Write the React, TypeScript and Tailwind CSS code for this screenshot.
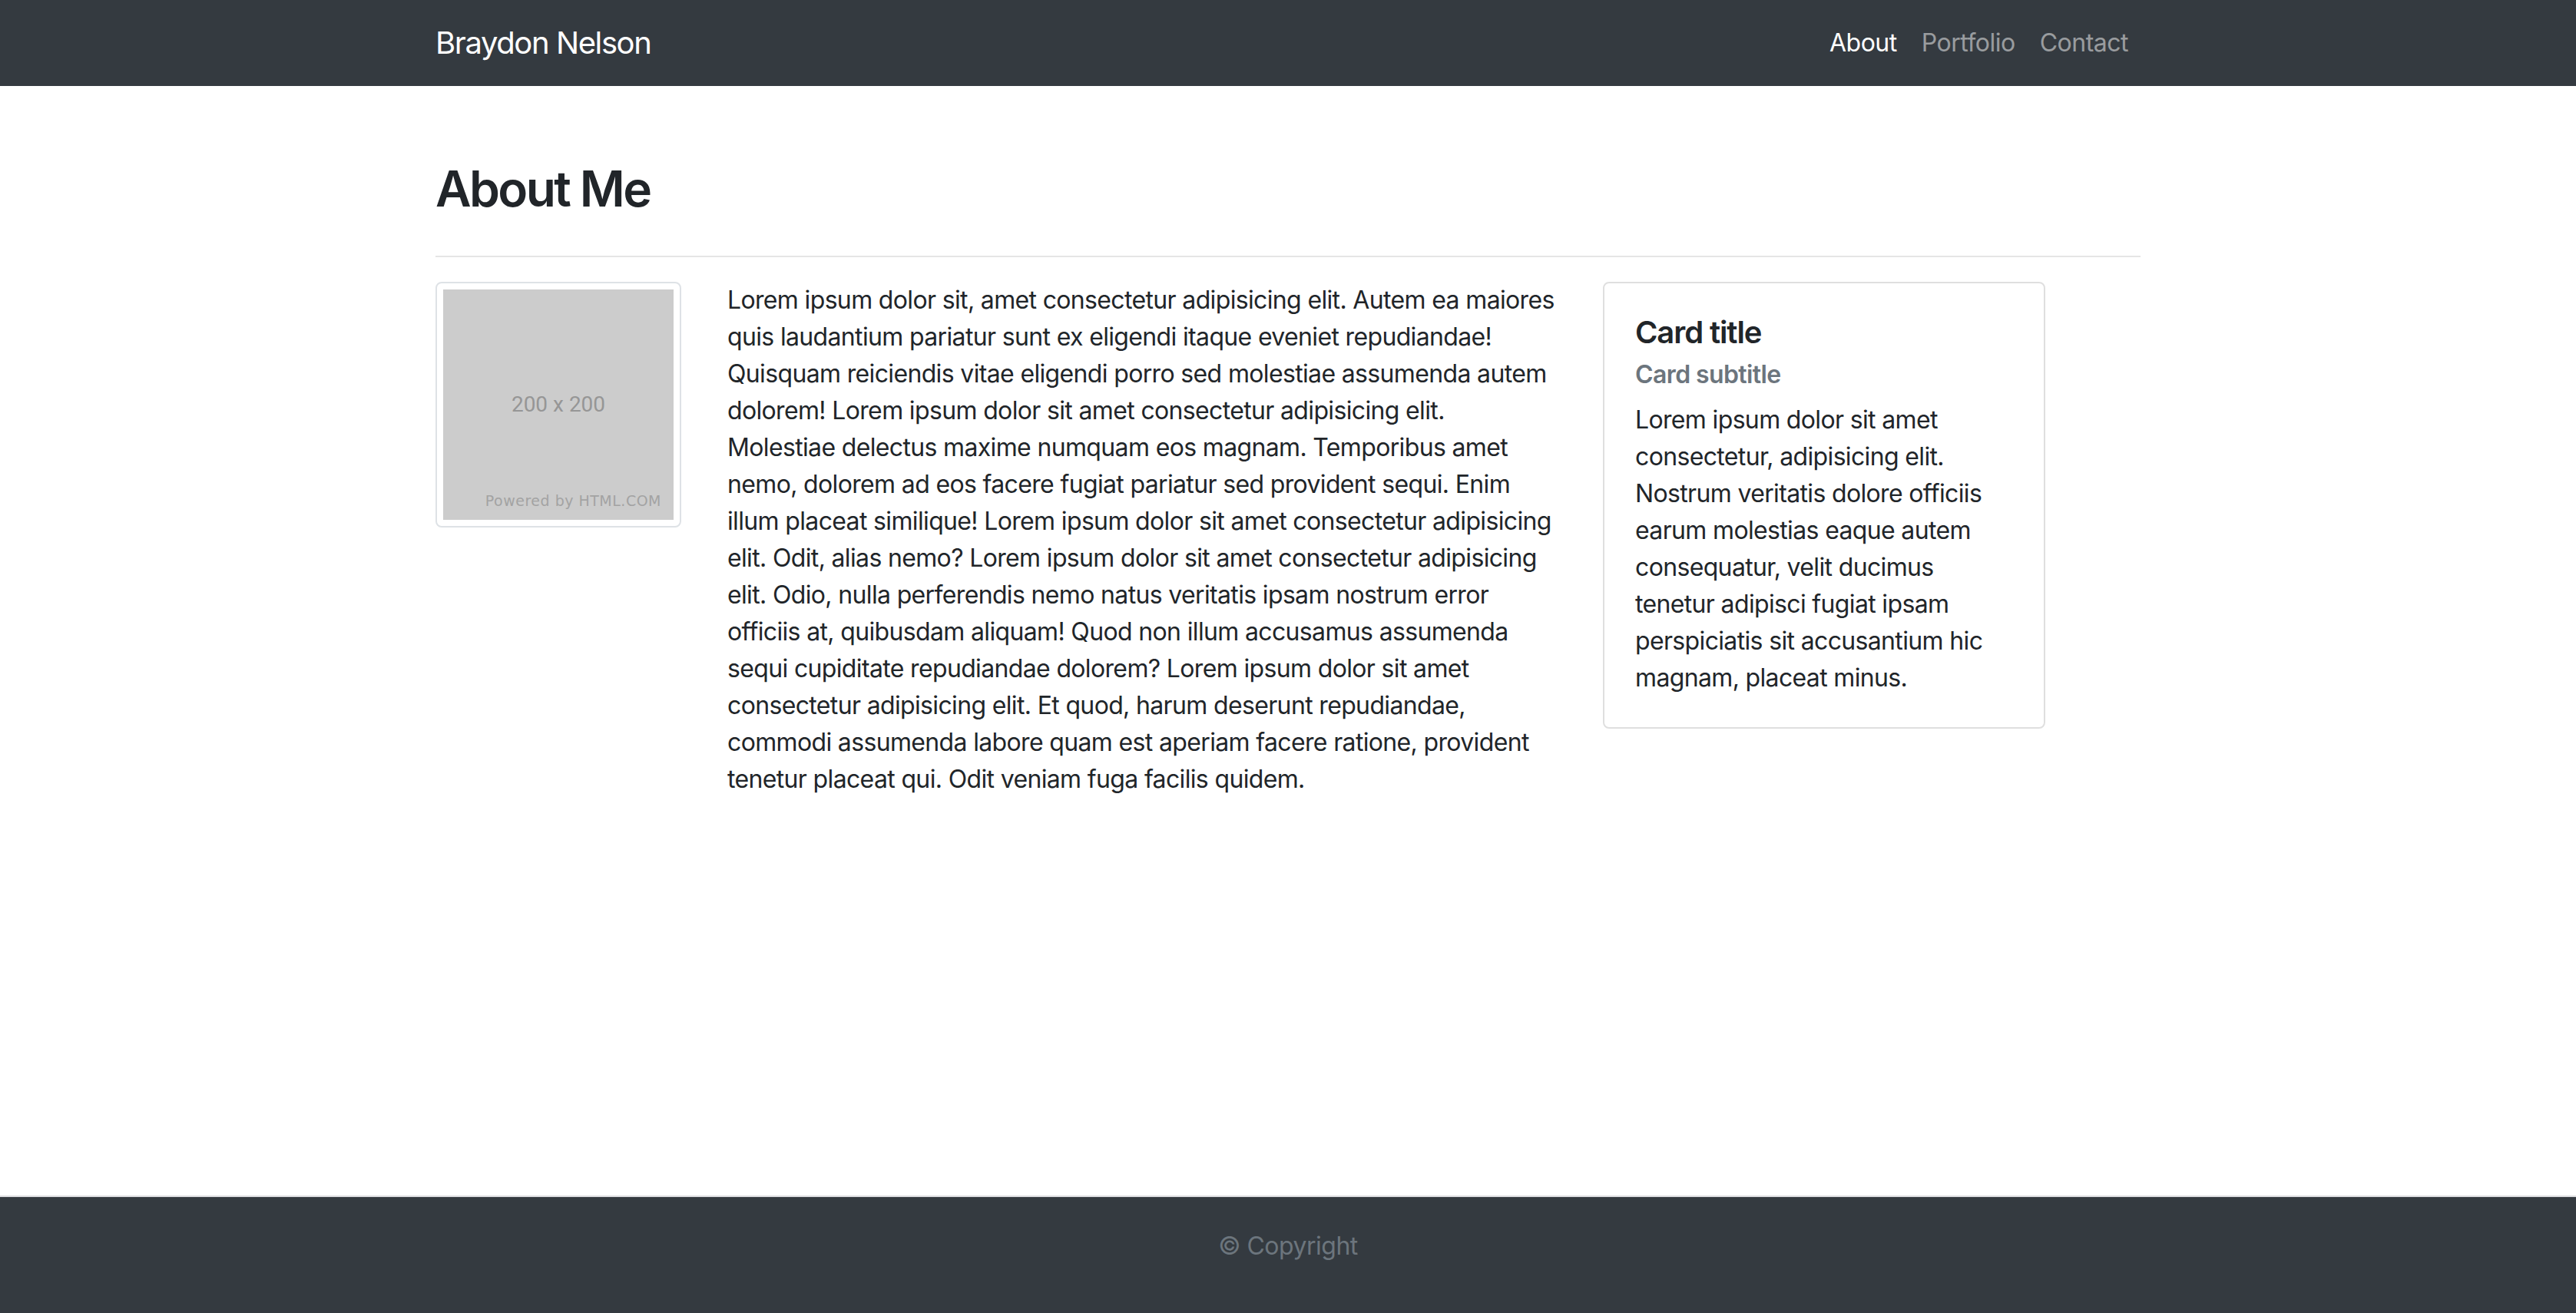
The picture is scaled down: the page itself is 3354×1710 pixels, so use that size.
import React from "react";

const para = [
  "Lorem ipsum dolor sit, amet consectetur adipisicing elit. Autem ea maiores",
  "quis laudantium pariatur sunt ex eligendi itaque eveniet repudiandae!",
  "Quisquam reiciendis vitae eligendi porro sed molestiae assumenda autem",
  "dolorem! Lorem ipsum dolor sit amet consectetur adipisicing elit.",
  "Molestiae delectus maxime numquam eos magnam. Temporibus amet",
  "nemo, dolorem ad eos facere fugiat pariatur sed provident sequi. Enim",
  "illum placeat similique! Lorem ipsum dolor sit amet consectetur adipisicing",
  "elit. Odit, alias nemo? Lorem ipsum dolor sit amet consectetur adipisicing",
  "elit. Odio, nulla perferendis nemo natus veritatis ipsam nostrum error",
  "officiis at, quibusdam aliquam! Quod non illum accusamus assumenda",
  "sequi cupiditate repudiandae dolorem? Lorem ipsum dolor sit amet",
  "consectetur adipisicing elit. Et quod, harum deserunt repudiandae,",
  "commodi assumenda labore quam est aperiam facere ratione, provident",
  "tenetur placeat qui. Odit veniam fuga facilis quidem.",
];

const cardLines = [
  "Lorem ipsum dolor sit amet",
  "consectetur, adipisicing elit.",
  "Nostrum veritatis dolore officiis",
  "earum molestias eaque autem",
  "consequatur, velit ducimus",
  "tenetur adipisci fugiat ipsam",
  "perspiciatis sit accusantium hic",
  "magnam, placeat minus.",
];

export default function App() {
  return (
    <div
      className="min-h-screen flex flex-col bg-white text-[#212529]"
      style={{ fontFamily: "Inter, 'Noto Sans', 'Liberation Sans', sans-serif" }}
    >
      <nav className="bg-[#343a40]">
        <div className="w-[2280px] mx-auto px-[30px] h-[112px] flex items-center justify-between">
          <span className="text-[40px] leading-[60px] text-white tracking-[-1.4px]">Braydon Nelson</span>
          <ul className="flex items-center tracking-[-0.5px]">
            <li className="px-[16px] text-[32px] leading-[48px] text-white">About</li>
            <li className="px-[16px] text-[32px] leading-[48px] text-white/50">Portfolio</li>
            <li className="px-[16px] text-[32px] leading-[48px] text-white/50">Contact</li>
          </ul>
        </div>
      </nav>

      <main className="flex-1">
        <div className="w-[2280px] mx-auto px-[30px] pt-[96px]">
          <h2 className="text-[64px] leading-[1.2] font-semibold tracking-[-2.6px] mb-[16px]">About Me</h2>
          <hr className="mt-[48px] mb-[32px] border-0 border-t-2 border-[rgba(0,0,0,0.1)]" />
          <div className="flex items-start gap-[60px]">
            <div className="w-[320px] shrink-0 p-[8px] border-2 border-[#dee2e6] rounded-[8px] bg-white">
              <div className="relative w-[300px] h-[300px] bg-[#cccccc] flex items-center justify-center">
                <span
                  className="text-[28px] text-[#969696]"
                  style={{ fontFamily: "Roboto, 'Liberation Sans', sans-serif" }}
                >
                  200 x 200
                </span>
                <span
                  className="absolute right-[16px] bottom-[10px] text-[19px] text-[#a3a3a3] tracking-[0.5px]"
                  style={{ fontFamily: "'DejaVu Sans', sans-serif" }}
                >
                  Powered by HTML.COM
                </span>
              </div>
            </div>
            <p className="w-[1080px] shrink-0 text-[32px] leading-[48px] whitespace-nowrap tracking-[-0.65px]">
              {para.map((l, i) => (
                <React.Fragment key={i}>
                  {l}
                  {i < para.length - 1 && <br />}
                </React.Fragment>
              ))}
            </p>
            <div className="w-[576px] shrink-0 border-2 border-[rgba(0,0,0,0.125)] rounded-[8px] p-[40px]">
              <h5 className="text-[40px] leading-[48px] font-semibold tracking-[-1.1px] mb-[24px]">Card title</h5>
              <h6 className="text-[32px] leading-[38.4px] font-semibold tracking-[-0.6px] text-[#6c757d] -mt-[12px] mb-[16px]">
                Card subtitle
              </h6>
              <p className="text-[32px] leading-[48px] whitespace-nowrap tracking-[-0.65px]">
                {cardLines.map((l, i) => (
                  <React.Fragment key={i}>
                    {l}
                    {i < cardLines.length - 1 && <br />}
                  </React.Fragment>
                ))}
              </p>
            </div>
          </div>
        </div>
      </main>

      <footer className="bg-[#343a40] border-t-2 border-[#dcdde0] h-[153px] pt-[40px] text-center">
        <span className="text-[32px] leading-[48px] text-[#6c757d] tracking-[-0.5px]">© Copyright</span>
      </footer>
    </div>
  );
}
